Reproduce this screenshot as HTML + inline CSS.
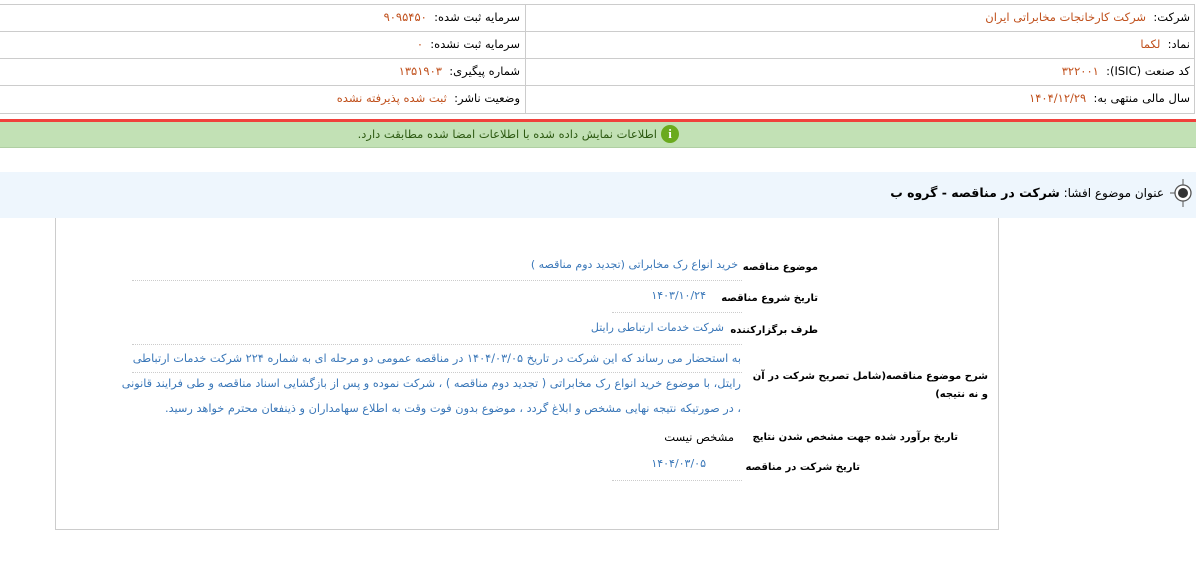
<!DOCTYPE html>
<html dir="rtl"><head><meta charset="utf-8"><style>
body{margin:0;width:1196px;height:567px;background:#fff;font-family:"DejaVu Sans",sans-serif;font-size:11.5px;color:#000;position:relative;overflow:hidden}
.a{position:absolute;white-space:nowrap}
.o{color:#c0501c}
.b{color:#3a77b8;font-size:11px}
.d{color:#3a77b8;font-size:11.3px}
.l{font-weight:bold;font-size:10px;letter-spacing:-0.3px}
.line{position:absolute;border-top:1px solid #ccc}
.dot{position:absolute;border-top:1px dotted #ccc}
</style></head><body>
<div style="position:absolute;left:0;top:4px;width:1194px;height:108px;border:1px solid #ccc;border-left:none"></div>
<div class="line" style="left:0;top:31px;width:1195px"></div>
<div class="line" style="left:0;top:58px;width:1195px"></div>
<div class="line" style="left:0;top:85px;width:1195px"></div>
<div style="position:absolute;left:525px;top:4px;height:109px;border-left:1px solid #ccc"></div>
<div class="a" style="right:6px;top:10px">شرکت:&nbsp; <span class="o">شرکت کارخانجات مخابراتی ایران</span></div>
<div class="a" style="right:6px;top:37px">نماد:&nbsp; <span class="o">لکما</span></div>
<div class="a" style="right:6px;top:64px">کد صنعت (ISIC):&nbsp; <span class="o">۳۲۲۰۰۱</span></div>
<div class="a" style="right:6px;top:91px">سال مالی منتهی به:&nbsp; <span class="o">۱۴۰۴/۱۲/۲۹</span></div>
<div class="a" style="right:676px;top:10px">سرمایه ثبت شده:&nbsp; <span class="o">۹۰۹۵۴۵۰</span></div>
<div class="a" style="right:676px;top:37px">سرمایه ثبت نشده:&nbsp; <span class="o">۰</span></div>
<div class="a" style="right:676px;top:64px">شماره پیگیری:&nbsp; <span class="o">۱۳۵۱۹۰۳</span></div>
<div class="a" style="right:676px;top:91px">وضعیت ناشر:&nbsp; <span class="o">ثبت شده پذیرفته نشده</span></div>
<div style="position:absolute;left:0;top:119px;width:1196px;height:3px;background:#f0413c"></div>
<div style="position:absolute;left:0;top:122px;width:1196px;height:25px;background:#c2e1b5;border-bottom:1px solid #b0cfa3"></div>
<div style="position:absolute;left:661px;top:125px;width:18px;height:18px;border-radius:50%;background:#6aaa1e;color:#fff;font-weight:bold;font-size:13px;text-align:center;line-height:18px;font-family:'Liberation Serif',serif">i</div>
<div class="a" style="right:539px;top:127px;color:#2d5a12">اطلاعات نمایش داده شده با اطلاعات امضا شده مطابقت دارد.</div>
<div style="position:absolute;left:0;top:172px;width:1196px;height:46px;background:#eef6fd"></div>
<svg style="position:absolute;left:1170px;top:179px" width="26" height="28" viewBox="0 0 26 28"><line x1="13" y1="0" x2="13" y2="6" stroke="#555"/><line x1="13" y1="22" x2="13" y2="28" stroke="#555"/><line x1="0" y1="14" x2="5" y2="14" stroke="#555"/><circle cx="13" cy="14" r="8" fill="#fff" stroke="#555" stroke-width="1.3"/><circle cx="13" cy="14" r="5" fill="#333"/></svg>
<div class="a" style="right:32px;top:185px;font-size:12px">عنوان موضوع افشا: <b style="font-size:12.5px">شرکت در مناقصه - گروه ب</b></div>
<div style="position:absolute;left:55px;top:218px;width:942px;height:311px;border:1px solid #ccc;border-top:none"></div>
<div class="a l" style="right:378px;top:262px">موضوع مناقصه</div>
<div class="a b" style="right:458px;top:258px">خرید انواع رک مخابراتی (تجدید دوم مناقصه )</div>
<div class="dot" style="left:132px;top:280px;width:610px"></div>
<div class="a l" style="right:378px;top:293px">تاریخ شروع مناقصه</div>
<div class="a b" style="right:490px;top:289px">۱۴۰۳/۱۰/۲۴</div>
<div class="dot" style="left:612px;top:312px;width:130px"></div>
<div class="a l" style="right:378px;top:325px">طرف برگزارکننده</div>
<div class="a b" style="right:472px;top:321px">شرکت خدمات ارتباطی رایتل</div>
<div class="dot" style="left:132px;top:344px;width:610px"></div>
<div class="a l" style="right:208px;top:368px;white-space:normal;width:240px;line-height:18px">شرح موضوع مناقصه(شامل تصریح شرکت در آن و نه نتیجه)</div>
<div class="a d" style="right:455px;top:352px">به استحضار می رساند که این شرکت در تاریخ ۱۴۰۴/۰۳/۰۵ در مناقصه عمومی دو مرحله ای به شماره ۲۲۴ شرکت خدمات ارتباطی</div>
<div class="dot" style="left:132px;top:372px;width:610px"></div>
<div class="a d" style="right:455px;top:377px">رایتل، با موضوع خرید انواع رک مخابراتی ( تجدید دوم مناقصه ) ، شرکت نموده و پس از بازگشایی اسناد مناقصه و طی فرایند قانونی</div>
<div class="a d" style="right:455px;top:402px">، در صورتیکه نتیجه نهایی مشخص و ابلاغ گردد ، موضوع بدون فوت وقت به اطلاع سهامداران و ذینفعان محترم خواهد رسید.</div>
<div class="a l" style="right:238px;top:432px">تاریخ برآورد شده جهت مشخص شدن نتایج</div>
<div class="a" style="right:462px;top:430px">مشخص نیست</div>
<div class="a l" style="right:336px;top:462px">تاریخ شرکت در مناقصه</div>
<div class="a b" style="right:490px;top:457px">۱۴۰۴/۰۳/۰۵</div>
<div class="dot" style="left:612px;top:480px;width:130px"></div>
</body></html>
